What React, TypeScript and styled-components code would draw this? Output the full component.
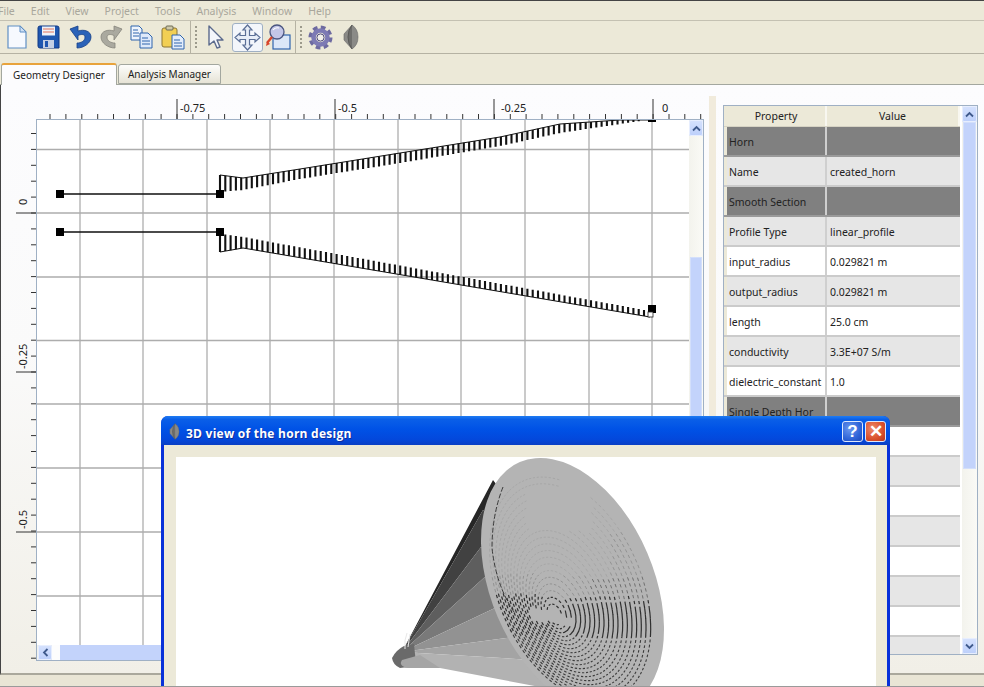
import React from "react";
import styled, { createGlobalStyle } from "styled-components";

const GlobalStyle = createGlobalStyle`
  html, body {
    margin: 0;
    padding: 0;
    background: #ece9d8;
    font-family: "Noto Sans", "Liberation Sans", sans-serif;
  }
`;

const Page = styled.div`
  position: relative;
  width: 984px;
  height: 687px;
  overflow: hidden;
  display: flex;
  flex-direction: column;
  background: #ece9d8;
  border-top: 1px solid #444;
  box-sizing: border-box;
  &::after {
    content: "";
    position: absolute;
    left: 0;
    right: 0;
    bottom: 0;
    height: 1px;
    background: #9a9a9a;
    z-index: 3;
  }
`;

const MenuBar = styled.div`
  display: flex;
  gap: 16px;
  height: 19px;
  align-items: center;
  margin-left: -2px;
  font-size: 10.5px;
  color: #a9a79c;
`;

const Toolbar = styled.div`
  display: flex;
  align-items: center;
  height: 32px;
  padding-left: 1px;
  border-top: 1px solid #c4c1b2;
  border-bottom: 1px solid #b5b2a3;
`;

const ToolSlot = styled.div<{ $w: number; $active?: boolean }>`
  width: ${(p) => p.$w}px;
  height: 29px;
  box-sizing: border-box;
  display: flex;
  align-items: center;
  justify-content: center;
  border-radius: 3px;
  border: 1px solid ${(p) => (p.$active ? "#9fb0c4" : "transparent")};
  background: ${(p) => (p.$active ? "#f3f6fb" : "transparent")};
`;

const ToolSep = styled.div`
  width: 1px;
  height: 32px;
  margin: 0 4px 0 2px;
  background: #b5b2a3;
`;

const Grip = styled.div`
  width: 2px;
  height: 22px;
  margin-right: 3px;
  background: repeating-linear-gradient(to bottom, #9c9a8c 0 2px, transparent 2px 4px);
`;

const TabStrip = styled.div`
  display: flex;
  align-items: flex-end;
  height: 31px;
  padding-left: 1px;
  gap: 1px;
  border-bottom: 1px solid #a3a79f;
  box-sizing: border-box;
`;

const Tab = styled.div<{ $active?: boolean }>`
  box-sizing: border-box;
  width: ${(p) => (p.$active ? 116 : 103)}px;
  height: ${(p) => (p.$active ? 22 : 20)}px;
  margin-bottom: ${(p) => (p.$active ? -1 : 0)}px;
  display: flex;
  align-items: center;
  justify-content: center;
  font-size: 10px;
  color: #1c1c1c;
  border-radius: 3px 3px 0 0;
  border: 1px solid #a3a79f;
  border-bottom: ${(p) => (p.$active ? "none" : "1px solid #a3a79f")};
  border-top: ${(p) => (p.$active ? "2px solid #e8a33c" : "1px solid #a3a79f")};
  background: ${(p) => (p.$active ? "#fcfcfe" : "linear-gradient(#fdfdfb, #e6e3d6)")};
  position: relative;
  z-index: 1;
`;

const Content = styled.div`
  display: flex;
  height: 590px;
  box-sizing: border-box;
  border-left: 1px solid #444;
  border-bottom: 2px solid #aaa89c;
  background: linear-gradient(#fcfcfe, #fafafa 45%, #f1efe7);
`;

const PlotPane = styled.div`
  width: 707px;
  padding-top: 12px;
  box-sizing: border-box;
  display: grid;
  grid-template-columns: 35px 668px;
  grid-template-rows: 22px 542px;
`;

const RulerCorner = styled.div``;

const PlotFrame = styled.div`
  display: flex;
  box-sizing: border-box;
  border: 1px solid #9fb0c4;
  background: #fff;
`;

const PlotColumn = styled.div`
  width: 652px;
  display: flex;
  flex-direction: column;
`;

const HScroll = styled.div`
  height: 15px;
  display: flex;
  align-items: center;
  background: #f2f2ec;
  padding: 0 0 0 1px;
`;

const ScrollBtn = styled.div`
  flex: none;
  width: 14px;
  height: 15px;
  display: flex;
  align-items: center;
  justify-content: center;
  border-radius: 2px;
  background: linear-gradient(#d6e2fd, #bccffb);
  box-shadow: inset 0 0 0 1px #e7eefe;
`;

const HTrackGap = styled.div`
  width: 8px;
  height: 15px;
  background: #fdfdfd;
`;

const HThumb = styled.div`
  flex: 1;
  height: 15px;
  background: #c3d3fb;
`;

const VScroll = styled.div<{ $w: number }>`
  width: ${(p) => p.$w}px;
  flex: none;
  display: flex;
  flex-direction: column;
  background: linear-gradient(to right, #f3f3ed, #fafaf6);
`;

const VBtn = styled(ScrollBtn)<{ $w: number }>`
  width: ${(p) => p.$w}px;
  height: 16px;
`;

const VGap = styled.div<{ $h: number }>`
  height: ${(p) => p.$h}px;
  flex: none;
`;

const VThumb = styled.div<{ $h: number }>`
  height: ${(p) => p.$h}px;
  flex: none;
  margin: 0 1px;
  background: #c3d3fb;
  box-shadow: inset 0 0 0 1px #d3dffb;
`;

const Splitter = styled.div`
  width: 7px;
  height: 564px;
  margin: 11px 0 0 1px;
  background: #f1ebdc;
`;

const TableFrame = styled.div`
  width: 255px;
  height: 550px;
  margin: 20px 0 0 7px;
  box-sizing: border-box;
  display: flex;
  border: 1px solid #9fb0c4;
  background: #fff;
`;

const TableBody = styled.div`
  width: 238px;
  height: 548px;
  overflow: hidden;
  background: #fff;
`;

const HeaderRow = styled.div`
  display: grid;
  width: 236px;
  grid-template-columns: 3px 100px 133px;
  height: 21px;
  box-sizing: border-box;
  background: #ece9d8;
  border-bottom: 1px solid #d6d3c4;
  font-size: 10.5px;
  color: #222;
`;

const HeaderCell = styled.div`
  display: flex;
  align-items: center;
  justify-content: center;
  border-right: 2px solid #f8f7f0;
`;

const Row = styled.div<{ $kind: "group" | "alt" | "plain" }>`
  display: grid;
  width: 236px;
  grid-template-columns: 3px 100px 133px;
  height: 30px;
  box-sizing: border-box;
  font-size: 10.5px;
  color: #222;
  border-bottom: 2px solid ${(p) => (p.$kind === "group" ? "#9a9a9a" : "#cbcbcb")};
  background: ${(p) =>
    p.$kind === "group" ? "#808080" : p.$kind === "alt" ? "#e6e6e6" : "#fff"};
`;

const RowStub = styled.div`
  background: #ece9d8;
`;

const Cell = styled.div`
  display: flex;
  align-items: center;
  padding: 2px 0 0 2px;
  white-space: nowrap;
  overflow: hidden;
  box-sizing: border-box;
  border-right: 2px solid #cfcfcf;
`;

const ValueCell = styled(Cell)`
  padding-left: 3px;
  border-right: none;
`;

const Footer = styled.div`
  flex: 1;
  background: #e9e5d5;
`;

const HornWindow = styled.div`
  position: absolute;
  left: 161px;
  top: 415px;
  width: 729px;
  height: 290px;
  display: flex;
  flex-direction: column;
  border-radius: 7px 7px 0 0;
  background: #0831d9;
  overflow: hidden;
  z-index: 2;
`;

const TitleBar = styled.div`
  height: 29px;
  flex: none;
  display: flex;
  align-items: center;
  padding: 2px 4px 0 8px;
  box-sizing: border-box;
  background: linear-gradient(#1f7cf2 0, #0a5fe8 12%, #0052e6 45%, #0348dc 80%, #0a3fc4 100%);
`;

const TitleText = styled.div`
  flex: 1;
  margin-left: 6px;
  padding-top: 3px;
  font-family: "Open Sans", "Liberation Sans", sans-serif;
  font-size: 12px;
  font-weight: 700;
  letter-spacing: 0.25px;
  color: #fff;
  text-shadow: 1px 1px 0 #0f2f9c;
`;

const CaptionBtn = styled.div<{ $close?: boolean }>`
  width: 21px;
  height: 21px;
  margin-left: 2px;
  box-sizing: border-box;
  display: flex;
  align-items: center;
  justify-content: center;
  border: 1px solid #dfe8fb;
  border-radius: 3px;
  color: #fff;
  font-family: "Liberation Sans", sans-serif;
  font-weight: 700;
  font-size: 17px;
  background: ${(p) =>
    p.$close
      ? "radial-gradient(circle at 35% 35%, #ee8a6c, #d9502c 60%, #b8371a)"
      : "radial-gradient(circle at 35% 35%, #6c98ef, #2f64d8 60%, #1c48b8)"};
`;

const WindowBody = styled.div`
  flex: 1;
  margin: 0 3px;
  padding: 12px 11px 0 12px;
  background: #ece9d8;
`;

const WindowCanvas = styled.div`
  background: #fff;
  height: 250px;
`;

const RulerLabel = styled.text`
  font-family: "Noto Sans", "Liberation Sans", sans-serif;
  font-size: 11px;
  fill: #222;
`;

const GRID_X = [80, 143, 207, 270, 334, 398, 461, 525, 589, 652];
const GRID_Y = [149.5, 213, 277, 340.5, 404, 468, 532, 596];

function lerp(points: number[][], x: number) {
  for (let i = 0; i < points.length - 1; i++) {
    const [x0, y0] = points[i];
    const [x1, y1] = points[i + 1];
    if (x <= x1) return y0 + ((y1 - y0) * (x - x0)) / (x1 - x0);
  }
  return points[points.length - 1][1];
}

function combPath(outer: number[][], inner: number[][], x0: number, x1: number) {
  let d = "";
  for (let x = x0; x <= x1; x += 5.3) {
    d += `M${x.toFixed(1)} ${lerp(outer, x).toFixed(1)}V${lerp(inner, x).toFixed(1)}`;
  }
  return d;
}

const upperTop = [[220, 175], [243, 178], [300, 169], [400, 153], [500, 137], [560, 124], [620, 120], [650, 120]];
const upperBottom = [[220, 192], [243, 190], [300, 179], [400, 163], [500, 146], [560, 133], [600, 127], [640, 121], [650, 120]];
const lowerTop = [[222, 234], [243, 237], [650, 311]];
const lowerBottom = [[220, 252], [243, 248], [650, 317]];

function polyline(points: number[][]) {
  return points.map((p) => p.join(",")).join(" ");
}

function TopRuler() {
  const ticks = [];
  for (let k = -8; k <= 33; k++) ticks.push(177 + k * 15.87);
  return (
    <svg width={668} height={22} viewBox="36 97 668 22" style={{ gridColumn: 2, gridRow: 1 }}>
      <path d={ticks.map((x) => `M${x.toFixed(1)} 114V119`).join("")} stroke="#333" strokeWidth="1" />
      <path d="M177 99V119M335 99V119M494 99V119M653 99V119" stroke="#333" strokeWidth="1" />
      <RulerLabel x={180} y={112}>-0.75</RulerLabel>
      <RulerLabel x={338} y={112}>-0.5</RulerLabel>
      <RulerLabel x={501} y={112}>-0.25</RulerLabel>
      <RulerLabel x={662} y={112}>0</RulerLabel>
    </svg>
  );
}

function LeftRuler() {
  const ticks = [];
  for (let k = -5; k <= 28; k++) ticks.push(213 + k * 15.9);
  return (
    <svg width={35} height={542} viewBox="1 119 35 542" style={{ gridColumn: 1, gridRow: 2 }}>
      <path d={ticks.map((y) => `M31 ${y.toFixed(1)}H36`).join("")} stroke="#333" strokeWidth="1" />
      <path d="M16 213H36M16 372H36M16 532H36" stroke="#333" strokeWidth="1" />
      <RulerLabel transform="translate(27 205) rotate(-90)">0</RulerLabel>
      <RulerLabel transform="translate(27 369) rotate(-90)">-0.25</RulerLabel>
      <RulerLabel transform="translate(27 529) rotate(-90)">-0.5</RulerLabel>
    </svg>
  );
}

function PlotCanvas() {
  return (
    <svg width={652} height={525} viewBox="37 120 652 525">
      <rect x="37" y="120" width="652" height="525" fill="#fff" />
      <path
        d={GRID_X.map((x) => `M${x} 120V645`).join("")}
        stroke="#b9b9b9"
        strokeWidth="1.5"
      />
      <path
        d={GRID_Y.map((y) => `M37 ${y}H689`).join("")}
        stroke="#adadad"
        strokeWidth="1.3"
      />
      <path d="M60 194H220M60 232H220" stroke="#111" strokeWidth="1.3" />
      <polyline points={polyline(upperTop)} fill="none" stroke="#111" strokeWidth="1" />
      <polyline points={polyline(lowerBottom)} fill="none" stroke="#111" strokeWidth="1" />
      <path d={combPath(upperTop, upperBottom, 220, 640)} stroke="#111" strokeWidth="2.1" />
      <path d={combPath(lowerTop, lowerBottom, 220, 648)} stroke="#111" strokeWidth="2.1" />
      <rect x="56" y="190" width="8" height="8" fill="#000" />
      <rect x="216" y="190" width="8" height="8" fill="#000" />
      <rect x="56" y="228" width="8" height="8" fill="#000" />
      <rect x="216" y="228" width="8" height="8" fill="#000" />
      <rect x="648" y="305" width="8" height="8" fill="#000" />
      <rect x="648" y="312" width="5" height="5" fill="#fff" stroke="#222" strokeWidth="0.8" />
      <rect x="648" y="120" width="8" height="2" fill="#000" />
    </svg>
  );
}

const chevronUp = (
  <svg width="9" height="7" viewBox="0 0 9 7">
    <path d="M1 5.5L4.5 2L8 5.5" fill="none" stroke="#3f5a8c" strokeWidth="1.8" />
  </svg>
);
const chevronDown = (
  <svg width="9" height="7" viewBox="0 0 9 7">
    <path d="M1 1.5L4.5 5L8 1.5" fill="none" stroke="#3f5a8c" strokeWidth="1.8" />
  </svg>
);
const chevronLeft = (
  <svg width="7" height="9" viewBox="0 0 7 9">
    <path d="M5.5 1L2 4.5L5.5 8" fill="none" stroke="#3f5a8c" strokeWidth="1.8" />
  </svg>
);

function NewIcon() {
  return (
    <svg width="20" height="24" viewBox="0 0 20 24">
      <path d="M1 1H13L19 7V23H1Z" fill="#f6f9fe" stroke="#5f8fc4" strokeWidth="1.2" />
      <path d="M13 1V7H19Z" fill="#cfe0f4" stroke="#5f8fc4" strokeWidth="1" />
    </svg>
  );
}

function SaveIcon() {
  return (
    <svg width="23" height="24" viewBox="0 0 23 24">
      <path d="M1 3Q1 1 3 1H20Q22 1 22 3V23H3Q1 23 1 21Z" fill="#1f57b0" stroke="#123a86" />
      <rect x="5" y="1.5" width="13" height="9" fill="#eef2f8" />
      <path d="M6 4H17M6 7H17" stroke="#e2735a" strokeWidth="1" />
      <rect x="6" y="15" width="11" height="8" fill="#c4d0e4" />
      <rect x="8" y="16" width="3" height="6" fill="#1f57b0" />
    </svg>
  );
}

function TurnIcon({ color, edge, flip }: { color: string; edge: string; flip?: boolean }) {
  return (
    <svg width="23" height="24" viewBox="0 0 23 24" style={flip ? { transform: "scaleX(-1)" } : undefined}>
      <path
        d="M1 4L9 1V6C15 4 22 6 22 12C22 18 15 23 8 23V18C12 18 16 16 16 12C16 9 12 9 9 10.5V15Z"
        fill={color}
        stroke={edge}
        strokeWidth="0.8"
      />
    </svg>
  );
}

function CopyIcon() {
  return (
    <svg width="23" height="24" viewBox="0 0 23 24">
      <path d="M1 1H9L12 4V15H1Z" fill="#eef4fc" stroke="#2f65ad" />
      <path d="M3 5H8M3 8H9M3 11H9" stroke="#2f65ad" />
      <path d="M10 8H18L22 12V23H10Z" fill="#dfeafa" stroke="#2f65ad" />
      <path d="M12 13H18M12 16H20M12 19H20" stroke="#2f65ad" />
    </svg>
  );
}

function PasteIcon() {
  return (
    <svg width="24" height="25" viewBox="0 0 24 25">
      <rect x="1" y="3" width="15" height="19" rx="2" fill="#f2cf54" stroke="#8a7434" />
      <rect x="5" y="1" width="7" height="4" rx="1" fill="#cfc9a8" stroke="#6d6a55" />
      <path d="M11 10H19L23 14V24H11Z" fill="#e3edfb" stroke="#2f65ad" />
      <path d="M13 15H19M13 18H21M13 21H21" stroke="#2f65ad" />
    </svg>
  );
}

function PointerIcon() {
  return (
    <svg width="16" height="24" viewBox="0 0 16 24">
      <path
        d="M1 1L15 15H9L12 22L9 23L6 16L1 20Z"
        fill="#f4f6fb"
        stroke="#5b6a8c"
        strokeWidth="1.4"
        strokeLinejoin="round"
      />
    </svg>
  );
}

function PanIcon() {
  return (
    <svg width="27" height="27" viewBox="0 0 27 27">
      <path
        d="M13.5 1L18 6H15.5V11.5H21V9L26 13.5L21 18V15.5H15.5V21H18L13.5 26L9 21H11.5V15.5H6V18L1 13.5L6 9V11.5H11.5V6H9Z"
        fill="#e8eef8"
        stroke="#5b6f96"
        strokeWidth="1.2"
      />
    </svg>
  );
}

function ZoomIcon() {
  return (
    <svg width="26" height="26" viewBox="0 0 26 26">
      <rect x="8" y="11" width="17" height="14" fill="#dbe7f8" stroke="#2f65ad" strokeWidth="1.2" />
      <circle cx="12" cy="8" r="7" fill="#c3c6e8" stroke="#4a5580" strokeWidth="1.3" />
      <path d="M8 6Q10 3 14 4" stroke="#fff" strokeWidth="1.2" fill="none" />
      <path d="M7 13L2 19" stroke="#d8452a" strokeWidth="2.4" />
      <path d="M1 22L2 17L5 20Z" fill="#d8452a" />
    </svg>
  );
}

function GearIcon() {
  return (
    <svg width="25" height="25" viewBox="0 0 25 25">
      <circle cx="12.5" cy="12.5" r="10" fill="none" stroke="#6d6aa0" strokeWidth="4" strokeDasharray="4.6 3.25" />
      <circle cx="12.5" cy="12.5" r="7" fill="none" stroke="#7d7ab4" strokeWidth="4.5" />
      <circle cx="12.5" cy="12.5" r="3.6" fill="#f3f1ea" stroke="#4c4a7c" />
    </svg>
  );
}

function HornIcon({ w, h }: { w: number; h: number }) {
  return (
    <svg width={w} height={h} viewBox="0 0 16 26">
      <path d="M1 10L9 1Q15 5 15 13Q15 21 9 25L1 16Z" fill="#8a8a87" stroke="#666" strokeWidth="0.6" />
      <path d="M9 1Q5 6 5 13Q5 20 9 25" fill="#6e6e6c" stroke="#5a5a58" />
    </svg>
  );
}

// the rim is a tilted ellipse; the rings inside it close in on the throat
const RIM = { cx: 572.5, cy: 585, rx: 133.7, ry: 81.4, rot: 66.8 };
const THROAT = { x: 553, y: 617 };

function ringShade(x: number, y: number) {
  if (Math.abs(x - THROAT.x) < 22 && Math.abs(y - THROAT.y) < 6) return "";
  if (y > 636) return "fine";
  if (y >= 596) return "dark";
  if (y > 575) return x > 590 ? "mid" : "soft";
  if (y > 530) return x > 610 ? "soft" : "faint";
  if (y > 490) return x > 590 || x < 525 ? "faint" : "";
  return x < 560 ? "faint" : "";
}

function buildRingDashes() {
  const rad = (RIM.rot * Math.PI) / 180;
  const cos = Math.cos(rad);
  const sin = Math.sin(rad);
  const out: Record<string, string> = { dark: "", fine: "", mid: "", soft: "", faint: "" };
  for (let i = 0; i < 20; i++) {
    const s = 0.88 - i * 0.042;
    const cx = RIM.cx + (THROAT.x - RIM.cx) * (1 - s);
    const cy = RIM.cy + (THROAT.y - RIM.cy) * (1 - s);
    const at = (t: number) => {
      const ex = RIM.rx * s * Math.cos(t);
      const ey = RIM.ry * s * Math.sin(t);
      return [cx + ex * cos - ey * sin, cy + ex * sin + ey * cos];
    };
    const n = Math.round((2 * Math.PI * 108 * s) / 5);
    const dt = (Math.PI * 2) / n;
    for (let j = 0; j < n; j++) {
      const t = j * dt;
      const [x, y] = at(t);
      const shade = ringShade(x, y);
      if (!shade) continue;
      const inBand = x > 565 && Math.abs(y - 616) < 15;
      const [x2, y2] = at(t + dt * (inBand ? 1.25 : 0.55));
      out[shade] += `M${x.toFixed(1)} ${y.toFixed(1)}L${x2.toFixed(1)} ${y2.toFixed(1)}`;
    }
  }
  return out;
}

const ringDashes = buildRingDashes();

// every wedge runs from the throat to the rim and on to the rim's centre, which the rim hides
const CONE_WEDGES = [
  { fill: "#262626", points: "402,652 493,480 572,585 483,510" },
  { fill: "#414141", points: "402,652 483,510 572,585 481,547" },
  { fill: "#5e5e5e", points: "402,652 481,547 572,585 487,575" },
  { fill: "#797979", points: "402,652 487,575 572,585 497,607" },
  { fill: "#929292", points: "402,652 497,607 572,585 513,637" },
  { fill: "#a4a4a4", points: "402,652 513,637 572,585 533,660" },
  { fill: "#b2b2b2", points: "402,652 533,660 572,585 590,700 540,687 440,668 400,668" },
];

function HornModel() {
  return (
    <svg width={700} height={230} viewBox="176 457 700 230">
      {CONE_WEDGES.map((w) => (
        <polygon key={w.fill} points={w.points} fill={w.fill} />
      ))}
      <path d="M392 658Q396 650 404 646L414 644L416 664L400 668Q393 665 392 658Z" fill="#6a6a6a" />
      <path d="M402 660Q398 666 408 668L440 668L420 655Z" fill="#a5a5a5" />
      <path d="M407 633Q404 640 405 649M410 634L408 647" stroke="#e8e8e8" strokeWidth="1" fill="none" />
      <ellipse
        cx={RIM.cx}
        cy={RIM.cy}
        rx={RIM.rx}
        ry={RIM.ry}
        transform={`rotate(${RIM.rot} ${RIM.cx} ${RIM.cy})`}
        fill="#b4b4b4"
      />
      <path d={ringDashes.faint} stroke="#a7a7a7" strokeWidth="1" />
      <path d={ringDashes.soft} stroke="#939393" strokeWidth="1" />
      <path d={ringDashes.mid} stroke="#6f6f6f" strokeWidth="1" />
      <path d={ringDashes.fine} stroke="#3c3c3c" strokeWidth="1.1" />
      <path d={ringDashes.dark} stroke="#303030" strokeWidth="1.2" />
      <path d="M503 487Q492 515 492 548Q496 585 514 612" fill="none" stroke="#3a3a3a" strokeWidth="1" strokeDasharray="5 2" />
    </svg>
  );
}

type RowData = { kind: "group" | "alt" | "plain"; name: string; value: string };

const ROWS: RowData[] = [
  { kind: "group", name: "Horn", value: "" },
  { kind: "alt", name: "Name", value: "created_horn" },
  { kind: "group", name: "Smooth Section", value: "" },
  { kind: "alt", name: "Profile Type", value: "linear_profile" },
  { kind: "plain", name: "input_radius", value: "0.029821 m" },
  { kind: "alt", name: "output_radius", value: "0.029821 m" },
  { kind: "plain", name: "length", value: "25.0 cm" },
  { kind: "alt", name: "conductivity", value: "3.3E+07 S/m" },
  { kind: "plain", name: "dielectric_constant", value: "1.0" },
  { kind: "group", name: "Single Depth Hor", value: "" },
  { kind: "plain", name: "", value: "" },
  { kind: "alt", name: "", value: "" },
  { kind: "plain", name: "", value: "" },
  { kind: "alt", name: "", value: "" },
  { kind: "plain", name: "", value: "" },
  { kind: "alt", name: "", value: "" },
  { kind: "plain", name: "", value: "" },
  { kind: "alt", name: "", value: "" },
];

const MENU = ["File", "Edit", "View", "Project", "Tools", "Analysis", "Window", "Help"];

export default function App() {
  return (
    <Page>
      <GlobalStyle />
      <MenuBar>
        {MENU.map((m) => (
          <span key={m}>{m}</span>
        ))}
      </MenuBar>
      <Toolbar>
        <ToolSlot $w={31}><NewIcon /></ToolSlot>
        <ToolSlot $w={33}><SaveIcon /></ToolSlot>
        <ToolSlot $w={31}><TurnIcon color="#2a62b8" edge="#173f86" /></ToolSlot>
        <ToolSlot $w={30}><TurnIcon color="#aaa99f" edge="#85847b" flip /></ToolSlot>
        <ToolSlot $w={31}><CopyIcon /></ToolSlot>
        <ToolSlot $w={31}><PasteIcon /></ToolSlot>
        <ToolSep />
        <Grip />
        <ToolSlot $w={32}><PointerIcon /></ToolSlot>
        <ToolSlot $w={31} $active><PanIcon /></ToolSlot>
        <ToolSlot $w={30}><ZoomIcon /></ToolSlot>
        <ToolSep />
        <Grip />
        <ToolSlot $w={30}><GearIcon /></ToolSlot>
        <ToolSlot $w={32}><HornIcon w={16} h={26} /></ToolSlot>
      </Toolbar>
      <TabStrip>
        <Tab $active>Geometry Designer</Tab>
        <Tab>Analysis Manager</Tab>
      </TabStrip>
      <Content>
        <PlotPane>
          <RulerCorner />
          <TopRuler />
          <LeftRuler />
          <PlotFrame>
            <PlotColumn>
              <PlotCanvas />
              <HScroll>
                <ScrollBtn>{chevronLeft}</ScrollBtn>
                <HTrackGap />
                <HThumb />
              </HScroll>
            </PlotColumn>
            <VScroll $w={14}>
              <VBtn $w={14}>{chevronUp}</VBtn>
              <VGap $h={121} />
              <VThumb $h={340} />
            </VScroll>
          </PlotFrame>
        </PlotPane>
        <Splitter />
        <TableFrame>
          <TableBody>
            <HeaderRow>
              <span />
              <HeaderCell>Property</HeaderCell>
              <HeaderCell>Value</HeaderCell>
            </HeaderRow>
            {ROWS.map((r, i) => (
              <Row key={i} $kind={r.kind}>
                <RowStub />
                <Cell>{r.name}</Cell>
                <ValueCell>{r.value}</ValueCell>
              </Row>
            ))}
          </TableBody>
          <VScroll $w={15}>
            <VBtn $w={15}>{chevronUp}</VBtn>
            <VThumb $h={347} />
            <VGap $h={169} />
            <VBtn $w={15}>{chevronDown}</VBtn>
          </VScroll>
        </TableFrame>
      </Content>
      <Footer />
      <HornWindow>
        <TitleBar>
          <HornIcon w={11} h={17} />
          <TitleText>3D view of the horn design</TitleText>
          <CaptionBtn>?</CaptionBtn>
          <CaptionBtn $close>✕</CaptionBtn>
        </TitleBar>
        <WindowBody>
          <WindowCanvas>
            <HornModel />
          </WindowCanvas>
        </WindowBody>
      </HornWindow>
    </Page>
  );
}
